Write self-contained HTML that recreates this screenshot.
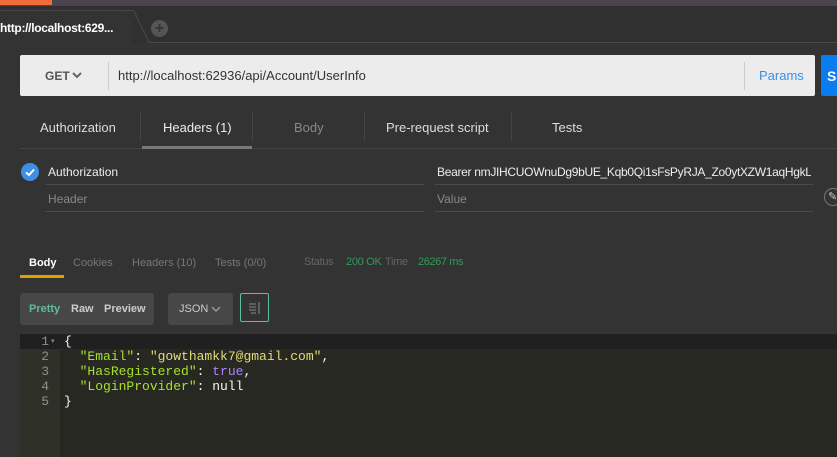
<!DOCTYPE html>
<html><head><style>
*{margin:0;padding:0;box-sizing:border-box}
body{width:837px;height:457px;overflow:hidden;background:#333;font-family:"Liberation Sans",sans-serif;position:relative;color:#ddd}
.a{position:absolute;white-space:nowrap}
.mono{font-family:"Liberation Mono",monospace;font-size:13px}
</style></head><body>
<div class="a" style="left:0;top:0;width:837px;height:6px;background:#4a4450"></div>
<div class="a" style="left:0;top:0;width:52px;height:5px;background:#f26b3a"></div>
<div class="a" style="left:0;top:6px;width:837px;height:37px;background:#303030"></div>
<div class="a" style="left:0;top:10px;width:132px;height:34px;background:#333;border-top:1px solid #444"></div>
<svg class="a" style="left:125px;top:10px" width="30" height="34"><path d="M0 0.5 L7 0.5 Q9 0.5 10 3 L24 32.5 L30 32.5" stroke="#484848" fill="#333"/></svg>
<div class="a" style="left:149px;top:42px;width:688px;height:1px;background:#484848"></div>
<div class="a" style="left:0;top:21px;font-size:12px;color:#fff;font-weight:bold;letter-spacing:-0.3px">http://localhost:629...</div>
<div class="a" style="left:151px;top:20px;width:17px;height:17px;border-radius:50%;background:#555;color:#333;font-size:16px;line-height:17px;text-align:center;font-weight:bold">+</div>
<div class="a" style="left:20px;top:55px;width:795px;height:41px;background:#ececec;border-radius:2px"></div>
<div class="a" style="left:45px;top:69px;font-size:12px;color:#555;font-weight:bold">GET</div>
<svg class="a" style="left:72px;top:72px" width="10" height="7"><path d="M1 1 L5 5 L9 1" stroke="#666" stroke-width="2" fill="none"/></svg>
<div class="a" style="left:108px;top:62px;width:1px;height:28px;background:#ccc"></div>
<div class="a" style="left:118px;top:68px;font-size:13px;color:#333">http://localhost:62936/api/Account/UserInfo</div>
<div class="a" style="left:744px;top:62px;width:1px;height:28px;background:#ccc"></div>
<div class="a" style="left:759px;top:68px;font-size:13px;color:#3d8fe6">Params</div>
<div class="a" style="left:821px;top:55px;width:20px;height:41px;background:#0b7cf0;border-radius:2px;color:#fff;font-weight:bold;font-size:14px;padding:13px 0 0 6px">S</div>
<div class="a" style="left:40px;top:120px;font-size:13px;color:#ddd">Authorization</div>
<div class="a" style="left:140px;top:112px;width:1px;height:29px;background:#444"></div>
<div class="a" style="left:163px;top:120px;font-size:13px;color:#eee">Headers (1)</div>
<div class="a" style="left:252px;top:112px;width:1px;height:29px;background:#444"></div>
<div class="a" style="left:294px;top:120px;font-size:13px;color:#888">Body</div>
<div class="a" style="left:364px;top:112px;width:1px;height:29px;background:#444"></div>
<div class="a" style="left:386px;top:120px;font-size:13px;color:#ddd">Pre-request script</div>
<div class="a" style="left:511px;top:112px;width:1px;height:29px;background:#444"></div>
<div class="a" style="left:552px;top:120px;font-size:13px;color:#ddd">Tests</div>
<div class="a" style="left:20px;top:148px;width:817px;height:1px;background:#454545"></div>
<div class="a" style="left:142px;top:146px;width:110px;height:3px;background:#7a7a7a"></div>
<svg class="a" style="left:21px;top:163px" width="18" height="18"><circle cx="9" cy="9" r="9" fill="#3d8fe6"/><path d="M5 9.5 L8 12 L13 6.5" stroke="#fff" stroke-width="2" fill="none"/></svg>
<div class="a" style="left:48px;top:165px;font-size:12px;color:#eee">Authorization</div>
<div class="a" style="left:437px;top:165px;font-size:12px;color:#eee;width:374px;overflow:hidden;letter-spacing:-0.3px">Bearer nmJIHCUOWnuDg9bUE_Kqb0Qi1sFsPyRJA_Zo0ytXZW1aqHgkLS</div>
<div class="a" style="left:45px;top:184px;width:379px;height:1px;background:#4a4a4a"></div>
<div class="a" style="left:435px;top:184px;width:378px;height:1px;background:#4a4a4a"></div>
<div class="a" style="left:48px;top:192px;font-size:12px;color:#888">Header</div>
<div class="a" style="left:437px;top:192px;font-size:12px;color:#888">Value</div>
<div class="a" style="left:45px;top:211px;width:379px;height:1px;background:#4a4a4a"></div>
<div class="a" style="left:435px;top:211px;width:378px;height:1px;background:#4a4a4a"></div>
<div class="a" style="left:824px;top:188px;width:18px;height:18px;border-radius:50%;border:1px solid #777;color:#ccc;font-size:11px;padding:1px 0 0 3px">✎</div>
<div class="a" style="left:29px;top:257px;font-size:11px;color:#fff;font-weight:bold">Body</div>
<div class="a" style="left:20px;top:275px;width:44px;height:3px;background:#e0a000"></div>
<div class="a" style="left:73px;top:257px;font-size:11px;color:#777">Cookies</div>
<div class="a" style="left:132px;top:257px;font-size:11px;color:#777">Headers (10)</div>
<div class="a" style="left:215px;top:257px;font-size:11px;color:#777">Tests (0/0)</div>
<div class="a" style="left:304px;top:256px;font-size:11px;color:#666;letter-spacing:-0.3px">Status</div>
<div class="a" style="left:346px;top:256px;font-size:11px;color:#2f9a5a;letter-spacing:-0.3px">200 OK</div>
<div class="a" style="left:385px;top:256px;font-size:11px;color:#666;letter-spacing:-0.3px">Time</div>
<div class="a" style="left:418px;top:256px;font-size:11px;color:#2f9a5a;letter-spacing:-0.4px">26267 ms</div>
<div class="a" style="left:20px;top:293px;width:134px;height:32px;background:#474747;border-radius:3px"></div>
<div class="a" style="left:29px;top:303px;font-size:11px;font-weight:bold;color:#5bbfa0">Pretty</div>
<div class="a" style="left:71px;top:303px;font-size:11px;font-weight:bold;color:#ccc">Raw</div>
<div class="a" style="left:104px;top:303px;font-size:11px;font-weight:bold;color:#ccc">Preview</div>
<div class="a" style="left:168px;top:293px;width:65px;height:32px;background:#474747;border-radius:3px"></div>
<div class="a" style="left:179px;top:303px;font-size:11px;color:#ccc">JSON</div>
<svg class="a" style="left:211px;top:306px" width="10" height="7"><path d="M1 1 L5 5 L9 1" stroke="#999" stroke-width="1.5" fill="none"/></svg>
<div class="a" style="left:240px;top:293px;width:29px;height:29px;border:1px solid #5bbfa0;border-radius:2px"></div>
<svg class="a" style="left:248px;top:301px" width="14" height="14"><path d="M1 3h7M1 6h7M1 9h7M3 12h5M11 1v12" stroke="#888" stroke-width="1"/></svg>
<div class="a" style="left:20px;top:334px;width:817px;height:123px;background:#272822"></div>
<div class="a" style="left:20px;top:334px;width:40px;height:123px;background:#2f3129"></div>
<div class="a" style="left:20px;top:334px;width:817px;height:15px;background:#202020"></div>
<div class="a mono" style="left:20px;top:334px;width:29px;text-align:right;line-height:15px;color:#8f908a">1<br>2<br>3<br>4<br>5</div>
<div class="a" style="left:51px;top:334px;font-size:7px;color:#888;line-height:15px">▾</div>
<div class="a mono" style="left:64px;top:334px;line-height:15px;color:#f8f8f2">{<br>&nbsp;&nbsp;<span style="color:#a6e22e">"Email"</span>: <span style="color:#e6db74">"gowthamkk7@gmail.com"</span>,<br>&nbsp;&nbsp;<span style="color:#a6e22e">"HasRegistered"</span>: <span style="color:#ae81ff">true</span>,<br>&nbsp;&nbsp;<span style="color:#a6e22e">"LoginProvider"</span>: null<br>}</div>
</body></html>
